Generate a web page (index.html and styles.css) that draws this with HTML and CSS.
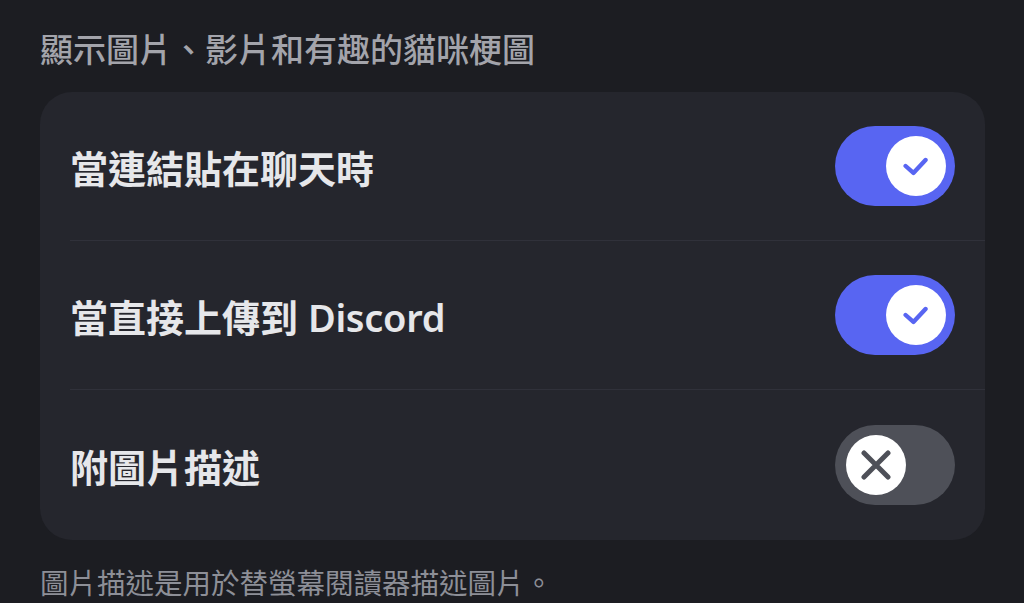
FILE: index.html
```html
<!DOCTYPE html>
<html lang="zh-Hant">
<head>
    <meta charset="UTF-8">
    <meta name="viewport" content="width=device-width, initial-scale=1.0">
    <title>圖片與影片</title>
    <link rel="stylesheet" href="styles.css">
</head>
<body>
    <div class="page">
        <h2 class="section-title">顯示圖片、影片和有趣的貓咪梗圖</h2>

        <div class="card">
            <div class="row">
                <span class="row-label">當連結貼在聊天時</span>
                <div class="toggle on">
                    <div class="knob">
                        <svg width="30" height="30" viewBox="0 0 30 30">
                            <path d="M3 15 L12 23 L26 8" fill="none" stroke="#5865f2" stroke-width="5" stroke-linecap="round" stroke-linejoin="round"/>
                        </svg>
                    </div>
                </div>
            </div>

            <div class="row">
                <span class="row-label">當直接上傳到 <span class="brand">Discord</span></span>
                <div class="toggle on">
                    <div class="knob">
                        <svg width="30" height="30" viewBox="0 0 30 30">
                            <path d="M3 15 L12 23 L26 8" fill="none" stroke="#5865f2" stroke-width="5" stroke-linecap="round" stroke-linejoin="round"/>
                        </svg>
                    </div>
                </div>
            </div>

            <div class="row">
                <span class="row-label">附圖片描述</span>
                <div class="toggle">
                    <div class="knob">
                        <svg width="30" height="30" viewBox="0 0 30 30">
                            <path d="M3 3 L27 27 M27 3 L3 27" fill="none" stroke="#4e5058" stroke-width="5" stroke-linecap="round"/>
                        </svg>
                    </div>
                </div>
            </div>
        </div>

        <p class="hint">圖片描述是用於替螢幕閱讀器描述圖片。</p>
    </div>
</body>
</html>
```

FILE: styles.css
```css
body {
    margin: 0;
    background-color: #1c1d22;
    font-family: "Noto Sans", "Noto Sans CJK TC", sans-serif;
    height: 100vh;
    overflow: hidden;
}

.page {
    padding: 30px 39px 0 40px;
}

.section-title {
    margin: 0 0 22px 0;
    font-size: 33px;
    font-weight: 500;
    line-height: 40px;
    color: #a3a4ab;
}

.card {
    background-color: #25262d;
    border-radius: 32px;
}

.row {
    display: flex;
    align-items: center;
    justify-content: space-between;
    height: 148px;
    margin-left: 30px;
    padding-right: 30px;
    border-bottom: 1px solid #30313a;
}

.row:last-child {
    border-bottom: none;
    height: 150px;
}

.row-label {
    font-size: 38px;
    font-weight: 700;
    color: #e6e7ea;
}

.brand {
    font-weight: 600;
    letter-spacing: -0.3px;
}

.toggle {
    width: 120px;
    height: 80px;
    border-radius: 40px;
    background-color: #4e5058;
    display: flex;
    align-items: center;
    padding: 0 11px;
    box-sizing: border-box;
}

.toggle.on {
    background-color: #5865f2;
    justify-content: flex-end;
    padding: 0 9px;
}

.knob {
    width: 60px;
    height: 60px;
    border-radius: 50%;
    background-color: #ffffff;
    display: flex;
    align-items: center;
    justify-content: center;
}

.toggle.on .knob svg {
    width: 26px;
    height: 26px;
}

.hint {
    margin: 24px 0 0 0;
    font-size: 28.5px;
    line-height: 38px;
    color: #8d8f97;
}
```
